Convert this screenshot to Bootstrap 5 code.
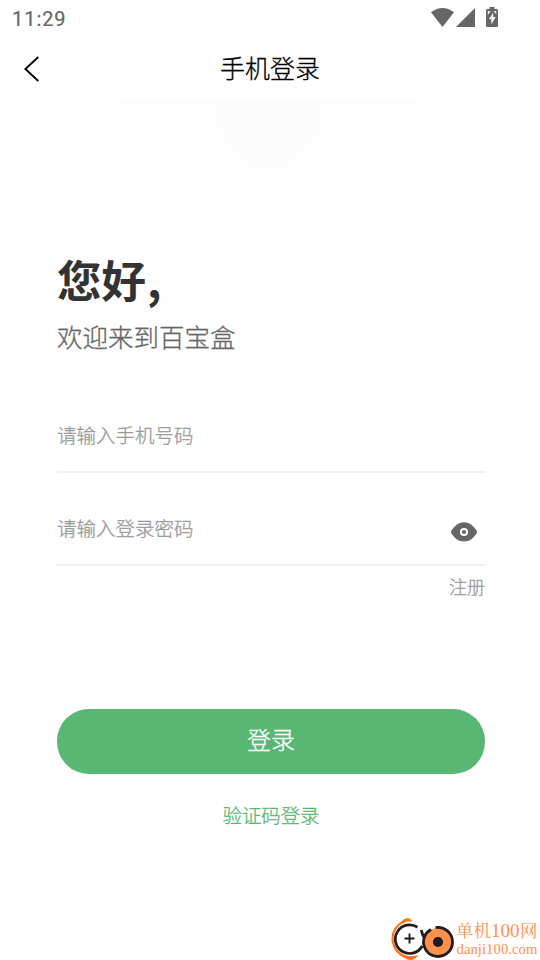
<!DOCTYPE html>
<html lang="zh-CN">
<head>
<meta charset="utf-8">
<meta name="viewport" content="width=device-width, initial-scale=1">
<title>手机登录</title>
<link href="https://cdn.jsdelivr.net/npm/bootstrap@5.3.0/dist/css/bootstrap.min.css" rel="stylesheet">
<style>
body{font-family:"Noto Sans CJK SC",sans-serif;font-weight:300;background:#fff;color:#333}
.screen{width:540px;height:960px}
.status-bar{height:38px;padding-left:12px;padding-right:42px;color:#666}
.clock{font:400 20px/38px Roboto,sans-serif;letter-spacing:.95px;-webkit-text-stroke:.2px #666}
.title-bar{height:63px;padding:0 24px}
.page-title{font-size:25px;line-height:59px;font-weight:300;color:#000}
.page-title,.welcome,.register,.code-login,.login-btn,.field .form-control::placeholder{-webkit-text-stroke:.3px currentColor}
.side{width:16px}
.login-area{padding:148px 55px 0 57px;background:radial-gradient(ellipse 245px 298px at 268px 0,#fcfcfc 0 17%,#fdfdfd 22% 57%,#fefefe 62% 98%,#fff 100%)}
.greeting{font-size:44.5px;line-height:60px;color:#333}
.greeting span{margin-left:1px}
.welcome{font-size:25.5px;line-height:36px;margin-top:9px;color:#666}
.field{height:94px;border-bottom:2px solid #f0f0f0}
.field-phone{height:119px}
.field-pass{height:93px;border-bottom-color:#f0f0f3}
.field .form-control,.field .form-control:focus{font-size:19.5px;font-weight:300;line-height:30px;height:30px;background:transparent;box-shadow:none;color:#333}
.field .form-control::placeholder{color:#999;opacity:1}
.field .first-input{margin-top:66px}
.pass-row{margin-top:40px}
.eye{margin-right:7px;margin-top:8px}
.register{font-size:18px;line-height:28px;margin-top:6px;color:#999}
.login-btn,.login-btn:hover{height:65px;margin-top:109px;border-radius:32px;background:#58b772;color:#fff;font-size:24px;font-weight:300}
.login-btn span{display:block;line-height:60px;height:65px}
.code-login{font-size:19.4px;line-height:30px;margin-top:26px;color:#58b772}
.site-mark{right:0;bottom:0;width:150px;height:44px}
</style>
<script src="https://cdn.jsdelivr.net/npm/bootstrap@5.3.0/dist/js/bootstrap.bundle.min.js"></script>
</head>
<body>
<div class="screen position-relative overflow-hidden d-flex flex-column">
  <div class="status-bar d-flex justify-content-between">
    <span class="clock">11:29</span>
    <svg width="68" height="38" viewBox="430 0 68 38" fill="#666" aria-hidden="true">
      <path d="M431 12.300Q442.500 3.800 454 12.300L442.500 27Z"/>
      <path d="M475 8V27H456Z"/>
      <path d="M489.500 7h5v2h2q1.500 0 1.500 1.500v15q0 1.500-1.500 1.500h-9q-1.500 0-1.500-1.500v-15q0-1.500 1.500-1.500h2z"/>
      <path d="M493.200 12.500l-4.200 6.700h2.400v5l4.200-7.200h-2.400z" fill="#fff"/>
      <path d="M487.800 11.200h3l-3 3.500zM493.500 11h2.700v3z" fill="#fff"/>
    </svg>
  </div>
  <header class="title-bar d-flex justify-content-between">
    <a href="#" class="side d-block" aria-label="返回"><svg class="d-block" width="16" height="62" viewBox="24 38 16 62" fill="none" stroke="#000" stroke-width="1.9"><path d="M38.300 57L25.300 69L38.300 81"/></svg></a>
    <h1 class="page-title m-0">手机登录</h1>
    <span class="side"></span>
  </header>
  <main class="login-area flex-grow-1">
    <h2 class="greeting fw-bold m-0">您好<span>,</span></h2>
    <p class="welcome mb-0">欢迎来到百宝盒</p>
    <form>
      <div class="field field-phone d-flex align-items-start">
        <input class="form-control border-0 rounded-0 p-0 first-input" type="tel" placeholder="请输入手机号码">
      </div>
      <div class="field field-pass d-flex align-items-start">
        <div class="pass-row d-flex w-100 align-items-start">
          <input class="form-control border-0 rounded-0 p-0" type="password" placeholder="请输入登录密码">
          <svg class="eye flex-shrink-0" width="28" height="22" viewBox="450 521 28 22" aria-hidden="true">
            <path d="M451.300 530.800Q456.500 522.200 464 522.200T476.700 530.800Q477.300 532 476.700 533.200Q471.500 541.600 464 541.600T451.300 533.200Q450.700 532 451.300 530.800Z" fill="#666"/>
            <circle cx="464" cy="532" r="3.100" fill="#666" stroke="#fff" stroke-width="2"/>
          </svg>
        </div>
      </div>
      <div class="register text-end">注册</div>
      <button type="button" class="btn login-btn border-0 w-100 p-0 d-block"><span>登录</span></button>
      <div class="code-login text-center">验证码登录</div>
    </form>
  </main>
  <svg class="site-mark position-absolute" viewBox="390 916 150 44" aria-label="单机100网">
    <path d="M402 921Q408 915 412.500 921.500L407 921.500Q397 925 394.500 933Q392 942 397 949.500Q402 955 409 956.200L418.500 955.500Q413 962 406.500 959Q394 954 391.700 942Q390 928 402 921Z" fill="#ff7419"/>
    <circle cx="409.500" cy="939" r="14.300" fill="#fff"/>
    <path d="M417.500 927.200A14.300 14.300 0 1 0 422.200 946" fill="none" stroke="#211b1d" stroke-width="2.700"/>
    <path d="M404.500 938.500h10M409.500 933.500v10" stroke="#211b1d" stroke-width="1.900"/>
    <circle cx="438" cy="942" r="14" fill="#ff914d"/>
    <path d="M421.300 930Q422.300 935 424.300 938M435.500 927.700A14.500 14.500 0 1 1 424.600 936.500Q426 932.500 431 929.500" fill="none" stroke="#211b1d" stroke-width="2.800"/>
    <circle cx="438" cy="942" r="5.100" fill="#211b1d"/>
    <text x="456" y="937" font-family="'Noto Serif CJK SC','Noto Sans CJK SC',serif" font-size="17.500" font-weight="400" fill="#ff914d">单机</text>
    <text x="491" y="937" font-family="'Liberation Serif',serif" font-size="19" textLength="28.500" lengthAdjust="spacingAndGlyphs" fill="#ff914d">100</text>
    <text x="520" y="937" font-family="'Noto Serif CJK SC','Noto Sans CJK SC',serif" font-size="17.500" font-weight="400" fill="#ff914d">网</text>
    <text x="456.500" y="954" font-family="'Liberation Serif',serif" font-size="15.500" textLength="81" lengthAdjust="spacingAndGlyphs" fill="#ff914d">danji100.com</text>
  </svg>
</div>
</body>
</html>
